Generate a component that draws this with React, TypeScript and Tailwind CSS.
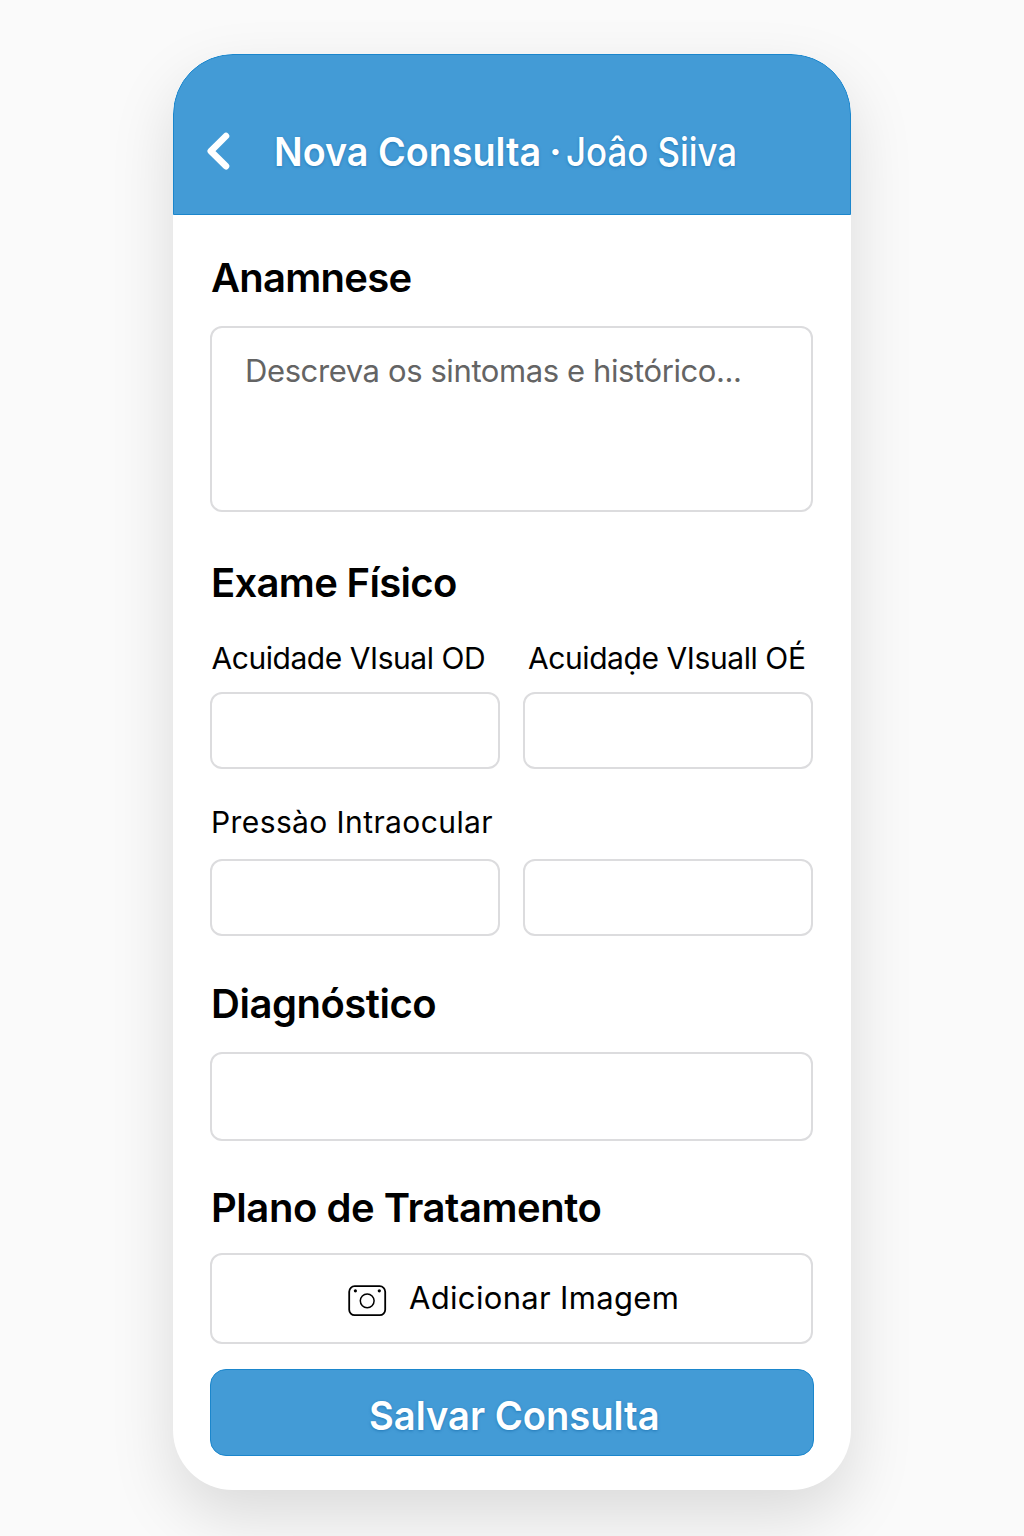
import type { ReactNode } from 'react';

function Heading({ children, className = '' }: { children: ReactNode; className?: string }) {
  return <h2 className={`ml-px h-12 w-max whitespace-nowrap text-[40px] leading-[48px] font-semibold ${className}`}>{children}</h2>;
}

function Label({ children, className = '' }: { children: ReactNode; className?: string }) {
  return <span className={`block h-9 w-max whitespace-nowrap text-[30px] leading-9 ${className}`}>{children}</span>;
}

function Field({ className = '' }: { className?: string }) {
  return <input className={`block w-full rounded-xl border-2 border-[#dcdcde] bg-white px-8 text-[30px] outline-none ${className}`} />;
}

function CameraIcon() {
  return (
    <svg width="40" height="32" viewBox="0 0 40 32" fill="none" stroke="#000" strokeWidth="1.8" className="mt-[4px] block shrink-0">
      <rect x="2.2" y="1.2" width="36" height="29" rx="5.5" />
      <circle cx="20.2" cy="15.8" r="6.9" strokeWidth="1.5" />
      <circle cx="8.4" cy="5.8" r="1.6" fill="#000" stroke="none" />
      <circle cx="32.3" cy="5.8" r="1.6" fill="#000" stroke="none" />
    </svg>
  );
}

export default function App() {
  return (
    <div className="flex h-[1536px] w-[1024px] items-start justify-center overflow-hidden bg-[#fafafa] pt-[54px] font-['Inter',sans-serif] text-black">
      <main className="h-[1436px] w-[678px] overflow-hidden rounded-[60px] bg-white shadow-[0_26px_64px_rgba(0,0,0,0.13)]">
        <header className="flex h-[161px] items-start rounded-t-[60px] border border-[#1b86cc] bg-[#439bd6] pt-[72px] pl-8 text-white">
          <svg width="26" height="40" viewBox="0 0 26 40" fill="none" stroke="#fff" strokeWidth="6.6" strokeLinecap="round" strokeLinejoin="round" className="mt-1 block shrink-0">
            <path d="M20 5 4.8 20.2 20 35.2" />
          </svg>
          <h1 className="ml-[42px] flex text-[40px] leading-[49px] whitespace-nowrap [text-shadow:0_1px_3px_rgba(10,95,160,0.55)]">
            <span className="w-[275px] origin-left scale-x-[0.943] font-semibold">Nova Consulta</span>
            <span className="w-[16.5px] font-semibold">·</span>
            <span className="origin-left scale-x-[0.87] font-medium">Joâo Siiva</span>
          </h1>
        </header>

        <section className="w-[641px] pt-[39px] pl-[37px]">
          <Heading className="tracking-[-0.75px]">Anamnese</Heading>
          <div className="mt-6 h-[186px] w-[603px] rounded-xl border-2 border-[#dcdcde] pt-[25px] pl-[33px]">
            <p className="w-max text-[31px] leading-9 tracking-[-0.4px] whitespace-nowrap text-[#646464]">Descreva os sintomas e histórico...</p>
          </div>

          <Heading className="mt-[47px] tracking-[-0.68px]">Exame Físico</Heading>
          <div className="mt-[33px] grid w-[603px] grid-cols-2 gap-x-[23px]">
            <label>
              <Label className="ml-[1.5px] tracking-[-0.45px]">Acuidade VIsual OD</Label>
              <Field className="mt-4 h-[77px]" />
            </label>
            <label>
              <Label className="ml-[5px] tracking-[-0.42px]">Acuidaḍe VIsuall OÉ</Label>
              <Field className="mt-4 h-[77px]" />
            </label>
          </div>
          <Label className="mt-[35px] ml-px tracking-[0.4px]">Pressào Intraocular</Label>
          <div className="mt-[19px] grid w-[603px] grid-cols-2 gap-x-[23px]">
            <Field className="h-[77px]" />
            <Field className="h-[77px]" />
          </div>

          <Heading className="mt-[44px] tracking-[-0.48px]">Diagnóstico</Heading>
          <div className="mt-6 w-[603px]"><Field className="h-[89px]" /></div>

          <Heading className="mt-[43px] tracking-[-0.45px]">Plano de Tratamento</Heading>
          <button className="mt-[21px] flex h-[91px] w-[603px] items-center rounded-xl border-2 border-[#dcdcde] pl-[135px]">
            <CameraIcon />
            <span className="mb-0.5 ml-[22px] text-[31px] leading-9 tracking-[0.33px] whitespace-nowrap">Adicionar Imagem</span>
          </button>
          <button className="mt-[25px] flex h-[87px] w-[604px] rounded-[16px] border border-[#1b86cc] bg-[#439bd6] pt-[22px] pl-[158px] text-[40px] leading-[48px] font-semibold whitespace-nowrap text-white [text-shadow:0_1px_3px_rgba(10,95,160,0.55)]">
            <span className="origin-left scale-x-[0.953]">Salvar Consulta</span>
          </button>
        </section>
      </main>
    </div>
  );
}
